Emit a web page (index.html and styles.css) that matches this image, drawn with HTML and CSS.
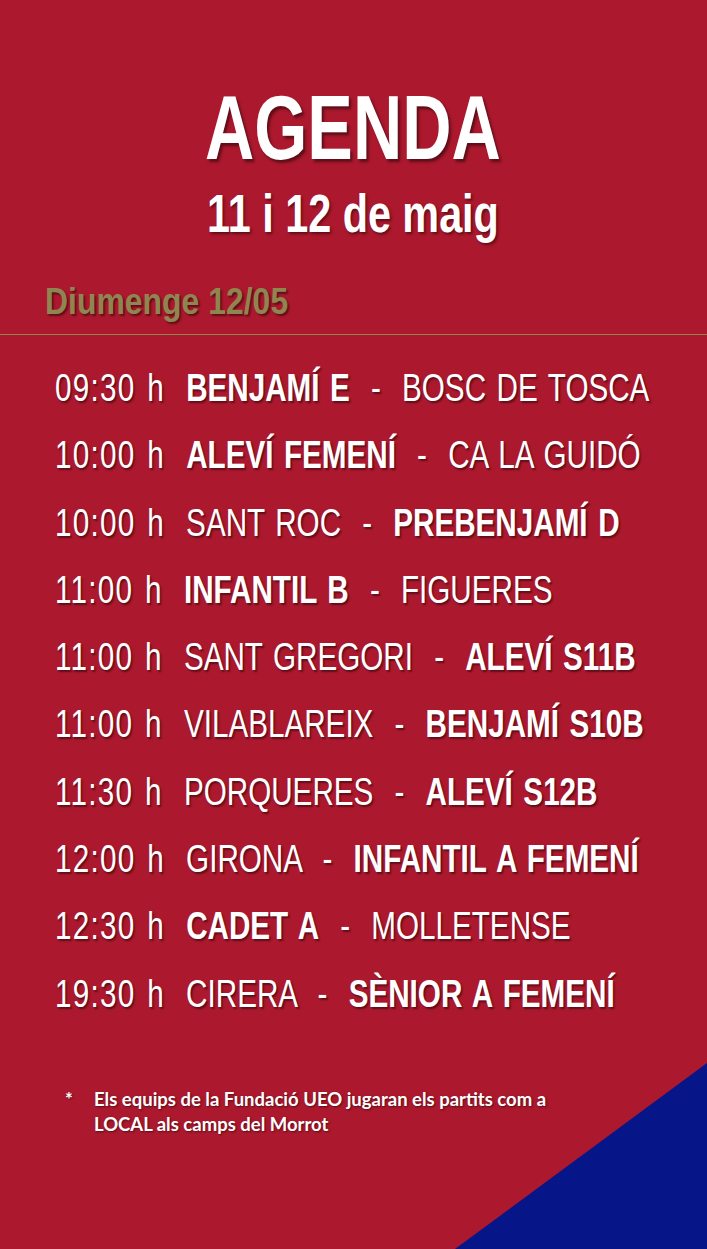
FILE: index.html
```
<!DOCTYPE html>
<html lang="ca">
<head>
<meta charset="utf-8">
<title>Agenda</title>
<link rel="stylesheet" href="styles.css">
</head>
<body>
<div class="page">
  <header class="header">
    <h1 class="title">AGENDA</h1>
    <p class="subtitle">11 i 12 de maig</p>
  </header>
  <h2 class="day">Diumenge 12/05</h2>
  <div class="rule"></div>
  <ul class="matches">
    <li class="match"><span class="time">09:30 h</span>  <b>BENJAMÍ E</b>  -  BOSC DE TOSCA</li>
    <li class="match"><span class="time">10:00 h</span>  <b>ALEVÍ FEMENÍ</b>  -  CA LA GUIDÓ</li>
    <li class="match"><span class="time">10:00 h</span>  SANT ROC  -  <b>PREBENJAMÍ D</b></li>
    <li class="match"><span class="time">11:00 h</span>  <b>INFANTIL B</b>  -  FIGUERES</li>
    <li class="match"><span class="time">11:00 h</span>  SANT GREGORI  -  <b>ALEVÍ S11B</b></li>
    <li class="match"><span class="time">11:00 h</span>  VILABLAREIX  -  <b>BENJAMÍ S10B</b></li>
    <li class="match"><span class="time">11:30 h</span>  PORQUERES  -  <b>ALEVÍ S12B</b></li>
    <li class="match"><span class="time">12:00 h</span>  GIRONA  -  <b>INFANTIL A FEMENÍ</b></li>
    <li class="match"><span class="time">12:30 h</span>  <b>CADET A</b>  -  MOLLETENSE</li>
    <li class="match"><span class="time">19:30 h</span>  CIRERA  -  <b>SÈNIOR A FEMENÍ</b></li>
  </ul>
  <div class="note">
    <span class="note-star">*</span>
    <p class="note-text">Els equips de la Fundació UEO jugaran els partits com a<br>LOCAL als camps del Morrot</p>
  </div>
  <svg class="corner" width="252" height="186" viewBox="0 0 252 186" aria-hidden="true">
    <polygon points="0,186 252,0 252,186" fill="#061689"/>
  </svg>
</div>
</body>
</html>
```

FILE: styles.css
```
html, body {
  margin: 0;
  padding: 0;
}

body {
  background: #ac182d;
}

.page {
  position: relative;
  width: 707px;
  height: 1249px;
  overflow: hidden;
  background: #ac182d;
  color: #ffffff;
  font-family: "Liberation Sans", Arial, sans-serif;
}

.header {
  padding-top: 82px;
  text-align: center;
}

.title {
  margin: 0;
  font-size: 91px;
  line-height: 91px;
  font-weight: 700;
  transform: scaleX(0.75);
  transform-origin: 351px 50%;
  text-shadow: 3px 3px 3px rgba(0, 0, 0, 0.45);
}

.subtitle {
  margin: 14px 0 0;
  font-size: 53px;
  line-height: 53px;
  font-weight: 700;
  transform: scaleX(0.78);
  transform-origin: 351px 50%;
  text-shadow: 2px 2px 3px rgba(0, 0, 0, 0.45);
}

.day {
  margin: 44px 0 0 45px;
  font-size: 36px;
  line-height: 36px;
  font-weight: 700;
  color: #8f8550;
  transform: scaleX(0.887);
  transform-origin: left center;
  text-shadow: 2px 2px 2px rgba(0, 0, 0, 0.45);
}

.rule {
  margin-top: 14px;
  height: 1px;
  background: #8f8550;
}

.matches {
  list-style: none;
  margin: 20px 0 0;
  padding: 0 0 0 55px;
}

.match {
  font-size: 38px;
  line-height: 67.3px;
  font-weight: 400;
  white-space: pre;
  word-spacing: 3px;
  transform: scaleX(0.78);
  transform-origin: left center;
  text-shadow: 2px 2px 2px rgba(0, 0, 0, 0.45);
}

.time {
  letter-spacing: 1.6px;
}

.match b {
  font-weight: 700;
}

.note {
  display: flex;
  margin-top: 59px;
  padding-left: 65px;
  font-family: Lato, "Open Sans", sans-serif;
  font-weight: 700;
  font-size: 18.5px;
  line-height: 25px;
  text-shadow: 1px 1px 2px rgba(0, 0, 0, 0.5);
}

.note-star {
  width: 29px;
  flex: none;
}

.note-text {
  margin: 0;
  white-space: nowrap;
}

.corner {
  position: absolute;
  right: 0;
  bottom: 0;
  display: block;
}
```
